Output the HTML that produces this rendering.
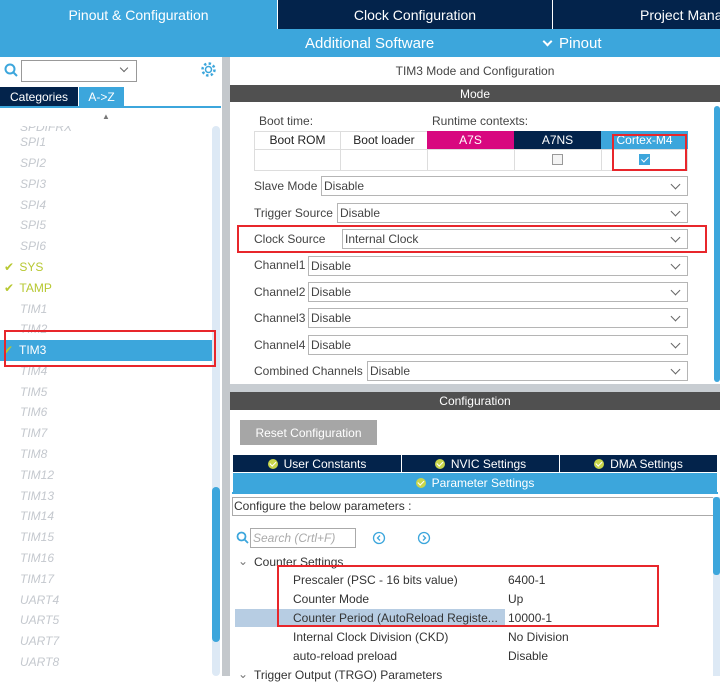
<!DOCTYPE html><html><head><style>
*{margin:0;padding:0;box-sizing:border-box}
body{width:720px;height:676px;overflow:hidden;position:relative;font-family:"Liberation Sans",sans-serif;font-size:12px;color:#333;background:#fff}
.a{position:absolute}
.c{display:flex;align-items:center;justify-content:center}
.li{position:absolute;left:20px;font-style:italic;color:#c4c8ce;font-size:12px}
.lbl{position:absolute;font-size:12px;color:#444}
.sel{position:absolute;height:20px;border:1px solid #b5b5b5;background:#fff;font-size:12px;padding-left:2px;line-height:18px;color:#444}
.sel:after{content:"";position:absolute;right:8px;top:4px;width:6px;height:6px;border-right:1px solid #666;border-bottom:1px solid #666;transform:rotate(45deg)}
.red{position:absolute;border:2px solid #e8262b}
.tab{position:absolute;top:455px;height:17px;background:#03234b;color:#fff;font-size:12px}
.ok{display:inline-block;width:10px;height:10px;border-radius:50%;background:#c8d64a;margin-right:6px;position:relative}
.ok:after{content:"";position:absolute;left:3px;top:1.5px;width:2.5px;height:5px;border-right:1.5px solid #fff;border-bottom:1.5px solid #fff;transform:rotate(45deg)}
.tr{position:absolute;font-size:12px;color:#333}
</style></head><body>
<!-- top bars -->
<div class="a c" style="left:0;top:0;width:277px;height:29px;background:#3ca6dc;color:#fff;font-size:14px">Pinout &amp; Configuration</div>
<div class="a c" style="left:278px;top:0;width:274px;height:29px;background:#03234b;color:#fff;font-size:14px">Clock Configuration</div>
<div class="a" style="left:553px;top:0;width:167px;height:29px;background:#03234b;color:#fff;font-size:14px;padding:7px 0 0 87px;white-space:nowrap;overflow:hidden">Project Manager</div>
<div class="a" style="left:0;top:29px;width:720px;height:28px;background:#3ca6dc"></div>
<div class="a" style="left:305px;top:35px;color:#fff;font-size:15px">Additional Software</div>
<div class="a" style="left:542px;top:35px;color:#fff;font-size:15px"><span style="display:inline-block;width:7px;height:7px;border-right:2px solid #fff;border-bottom:2px solid #fff;transform:rotate(45deg);margin:0 8px 3px 2px"></span>Pinout</div>
<!-- left panel -->
<svg class="a" style="left:4px;top:63px" width="16" height="16"><circle cx="6" cy="6" r="4.5" fill="none" stroke="#3ca6dc" stroke-width="2"/><line x1="9" y1="9" x2="13" y2="13" stroke="#3ca6dc" stroke-width="2"/></svg>
<div class="a" style="left:21px;top:60px;width:116px;height:22px;border:1px solid #999;background:#fff"></div>
<div class="a" style="left:121px;top:65px;width:6px;height:6px;border-right:1px solid #666;border-bottom:1px solid #666;transform:rotate(45deg)"></div>
<svg class="a" style="left:200px;top:61px" width="17" height="17"><circle cx="8.5" cy="8.5" r="3" fill="none" stroke="#3ca6dc" stroke-width="1.5"/><circle cx="8.5" cy="8.5" r="6" fill="none" stroke="#3ca6dc" stroke-width="2.5" stroke-dasharray="2.4 2.3"/></svg>
<div class="a c" style="left:0;top:87px;width:78px;height:19px;background:#03234b;color:#fff;font-size:12px">Categories</div>
<div class="a c" style="left:79px;top:87px;width:45px;height:19px;background:#3ca6dc;color:#fff;font-size:12px">A-&gt;Z</div>
<div class="a" style="left:0;top:106px;width:221px;height:2px;background:#3ca6dc"></div>
<div class="a" style="left:102px;top:112px;font-size:8px;color:#777">&#9650;</div>
<div class="a" style="left:212px;top:126px;width:8px;height:550px;background:#dde9f5;border-radius:4px"></div>
<div class="a" style="left:212px;top:487px;width:8px;height:155px;background:#3ca6dc;border-radius:4px"></div>
<div class="a" style="left:222px;top:57px;width:8px;height:619px;background:#c4c8cc"></div>
<div class="li" style="top:120px;clip-path:inset(6px 0 0 0)">SPDIFRX</div>
<div class="li" style="top:135px">SPI1</div><div class="li" style="top:156px">SPI2</div><div class="li" style="top:177px">SPI3</div><div class="li" style="top:198px">SPI4</div><div class="li" style="top:218px">SPI5</div><div class="li" style="top:239px">SPI6</div>
<div class="a" style="left:4px;top:260px;color:#b7c832;font-size:12px">&#10004; <span style="margin-left:2px">SYS</span></div>
<div class="a" style="left:4px;top:281px;color:#b7c832;font-size:12px">&#10004; <span style="margin-left:2px">TAMP</span></div>
<div class="li" style="top:302px">TIM1</div><div class="li" style="top:322px">TIM2</div>
<div class="a" style="left:0;top:340px;width:212px;height:21px;background:#3ca6dc"></div>
<div class="a" style="left:3px;top:343px;color:#b7c832;font-size:12px">&#10004;</div>
<div class="a" style="left:19px;top:343px;color:#fff;font-size:12px">TIM3</div>
<div class="li" style="top:364px">TIM4</div><div class="li" style="top:385px">TIM5</div><div class="li" style="top:405px">TIM6</div><div class="li" style="top:426px">TIM7</div><div class="li" style="top:447px">TIM8</div><div class="li" style="top:468px">TIM12</div><div class="li" style="top:489px">TIM13</div><div class="li" style="top:509px">TIM14</div><div class="li" style="top:530px">TIM15</div><div class="li" style="top:551px">TIM16</div><div class="li" style="top:572px">TIM17</div><div class="li" style="top:593px">UART4</div><div class="li" style="top:613px">UART5</div><div class="li" style="top:634px">UART7</div><div class="li" style="top:655px">UART8</div>
<div class="red" style="left:4px;top:330px;width:212px;height:37px"></div>
<!-- right panel -->
<div class="a" style="left:230px;top:64px;width:490px;text-align:center;font-size:12px;color:#444">TIM3 Mode and Configuration</div>
<div class="a c" style="left:230px;top:85px;width:490px;height:17px;background:#505050;color:#fff;font-size:12px">Mode</div>
<div class="a" style="left:714px;top:106px;width:6px;height:276px;background:#3ca6dc;border-radius:3px"></div>
<div class="lbl" style="left:259px;top:114px">Boot time:</div>
<div class="lbl" style="left:432px;top:114px">Runtime contexts:</div>
<div class="a" style="left:254px;top:131px;width:434px;height:40px;border:1px solid #ddd"></div>
<div class="a c" style="left:255px;top:131px;width:85px;height:18px;font-size:12px;color:#222">Boot ROM</div>
<div class="a c" style="left:341px;top:131px;width:86px;height:18px;font-size:12px;color:#222">Boot loader</div>
<div class="a c" style="left:427px;top:131px;width:87px;height:18px;background:#d8087f;color:#fff;font-size:12px">A7S</div>
<div class="a c" style="left:514px;top:131px;width:87px;height:18px;background:#03234b;color:#fff;font-size:12px">A7NS</div>
<div class="a c" style="left:601px;top:131px;width:87px;height:18px;background:#3ca6dc;color:#fff;font-size:12px">Cortex-M4</div>
<div class="a" style="left:254px;top:149px;width:434px;height:1px;background:#ddd"></div>
<div class="a" style="left:340px;top:131px;width:1px;height:40px;background:#ddd"></div>
<div class="a" style="left:427px;top:149px;width:1px;height:22px;background:#ddd"></div>
<div class="a" style="left:514px;top:149px;width:1px;height:22px;background:#ddd"></div>
<div class="a" style="left:601px;top:149px;width:1px;height:22px;background:#ddd"></div>
<div class="a" style="left:552px;top:154px;width:11px;height:11px;border:1px solid #999;background:#f4f4f4"></div>
<div class="a" style="left:639px;top:154px;width:11px;height:11px;background:#3ca6dc"></div>
<div class="a" style="left:643px;top:155px;width:3.5px;height:7px;border-right:1.5px solid #fff;border-bottom:1.5px solid #fff;transform:rotate(45deg)"></div>
<div class="red" style="left:612px;top:134px;width:75px;height:37px"></div>
<div class="lbl" style="left:254px;top:179px">Slave Mode</div><div class="sel" style="left:321px;top:176px;width:367px">Disable</div>
<div class="lbl" style="left:254px;top:206px">Trigger Source</div><div class="sel" style="left:337px;top:203px;width:351px">Disable</div>
<div class="lbl" style="left:254px;top:232px">Clock Source</div><div class="sel" style="left:342px;top:229px;width:346px">Internal Clock</div>
<div class="red" style="left:237px;top:225px;width:470px;height:28px"></div>
<div class="lbl" style="left:254px;top:258px">Channel1</div><div class="sel" style="left:308px;top:256px;width:380px">Disable</div>
<div class="lbl" style="left:254px;top:285px">Channel2</div><div class="sel" style="left:308px;top:282px;width:380px">Disable</div>
<div class="lbl" style="left:254px;top:311px">Channel3</div><div class="sel" style="left:308px;top:308px;width:380px">Disable</div>
<div class="lbl" style="left:254px;top:338px">Channel4</div><div class="sel" style="left:308px;top:335px;width:380px">Disable</div>
<div class="lbl" style="left:254px;top:364px">Combined Channels</div><div class="sel" style="left:367px;top:361px;width:321px">Disable</div>
<div class="a" style="left:230px;top:384px;width:490px;height:8px;background:#c8cdd2"></div>
<div class="a c" style="left:230px;top:392px;width:490px;height:18px;background:#505050;color:#fff;font-size:12px">Configuration</div>
<div class="a c" style="left:240px;top:420px;width:137px;height:25px;background:#a6a6a6;color:#fff;font-size:12px">Reset Configuration</div>
<div class="tab c" style="left:233px;width:168px"><span class="ok"></span>User Constants</div>
<div class="tab c" style="left:402px;width:157px"><span class="ok"></span>NVIC Settings</div>
<div class="tab c" style="left:560px;width:157px"><span class="ok"></span>DMA Settings</div>
<div class="a c" style="left:233px;top:473px;width:484px;height:19px;background:#3ca6dc;color:#fff;font-size:12px"><span class="ok"></span>Parameter Settings</div>
<div class="a" style="left:232px;top:492px;width:486px;height:2px;background:#3ca6dc"></div>
<div class="a" style="left:232px;top:497px;width:486px;height:19px;border:1px solid #aaa;font-size:12px;color:#333;padding:1px 0 0 1px">Configure the below parameters :</div>
<div class="a" style="left:713px;top:497px;width:7px;height:179px;background:#dde9f5"></div>
<div class="a" style="left:713px;top:497px;width:7px;height:78px;background:#3ca6dc;border-radius:3px"></div>
<svg class="a" style="left:236px;top:531px" width="14" height="14"><circle cx="5.5" cy="5.5" r="4" fill="none" stroke="#3ca6dc" stroke-width="1.8"/><line x1="8.5" y1="8.5" x2="12" y2="12" stroke="#3ca6dc" stroke-width="1.8"/></svg>
<div class="a" style="left:250px;top:528px;width:106px;height:20px;border:1px solid #aaa;font-size:12px;color:#aaa;font-style:italic;padding:2px 0 0 2px">Search (Crtl+F)</div>
<svg class="a" style="left:372px;top:531px" width="14" height="14"><circle cx="7" cy="7" r="5.5" fill="none" stroke="#3ca6dc" stroke-width="1.3"/><path d="M8 4.5L5.5 7L8 9.5" fill="none" stroke="#3ca6dc" stroke-width="1.3"/></svg>
<svg class="a" style="left:417px;top:531px" width="14" height="14"><circle cx="7" cy="7" r="5.5" fill="none" stroke="#3ca6dc" stroke-width="1.3"/><path d="M6 4.5L8.5 7L6 9.5" fill="none" stroke="#3ca6dc" stroke-width="1.3"/></svg>
<div class="tr" style="left:238px;top:554px;color:#777">&#8964;</div>
<div class="tr" style="left:254px;top:555px">Counter Settings</div>
<div class="a" style="left:235px;top:609px;width:270px;height:18px;background:#b7cde3"></div>
<div class="tr" style="left:293px;top:573px">Prescaler (PSC - 16 bits value)</div><div class="tr" style="left:508px;top:573px">6400-1</div>
<div class="tr" style="left:293px;top:592px">Counter Mode</div><div class="tr" style="left:508px;top:592px">Up</div>
<div class="tr" style="left:293px;top:611px">Counter Period (AutoReload Registe...</div><div class="tr" style="left:508px;top:611px">10000-1</div>
<div class="tr" style="left:293px;top:630px">Internal Clock Division (CKD)</div><div class="tr" style="left:508px;top:630px">No Division</div>
<div class="tr" style="left:293px;top:649px">auto-reload preload</div><div class="tr" style="left:508px;top:649px">Disable</div>
<div class="tr" style="left:238px;top:667px;color:#777">&#8964;</div>
<div class="tr" style="left:254px;top:668px">Trigger Output (TRGO) Parameters</div>
<div class="red" style="left:277px;top:565px;width:382px;height:62px"></div>
</body></html>
